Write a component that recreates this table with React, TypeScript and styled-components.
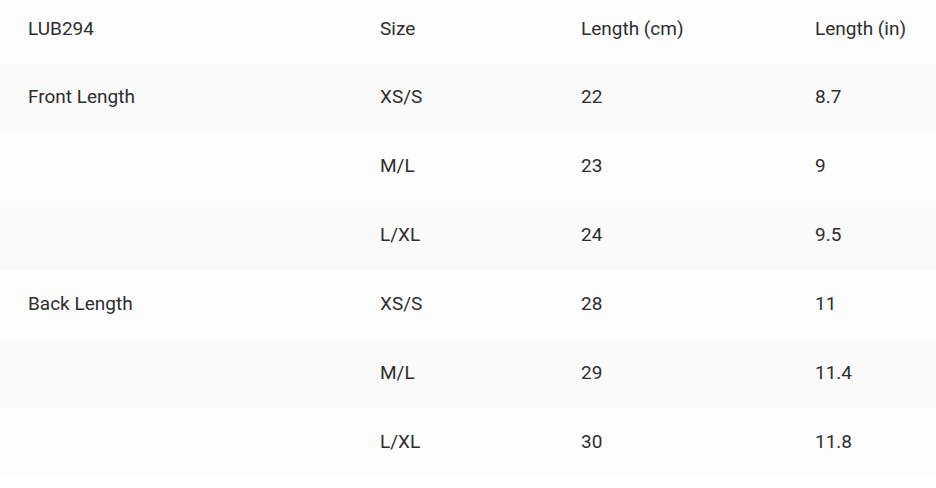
import React from "react";
import styled, { createGlobalStyle } from "styled-components";

const Global = createGlobalStyle`
  html, body { margin: 0; padding: 0; background: #ffffff; }
  body { font-family: Roboto, "Liberation Sans", sans-serif; }
`;

const Table = styled.div`
  display: grid;
  grid-template-columns: 352px 201px 234px 1fr;
  width: 936px;
`;

const Row = styled.div<{ $striped?: boolean; $header?: boolean }>`
  display: contents;
  & > div {
    background: ${(p) => (p.$striped ? "#fafafa" : "#fdfdfd")};
    padding: ${(p) => (p.$header ? "17px 0 23px 28px" : "22px 0 24px 28px")};
  }
`;

const Cell = styled.div`
  font-size: 19px;
  line-height: 23px;
  color: #2e2e2e;
  white-space: nowrap;
`;

const rows: [string, string, string, string][] = [
  ["Front Length", "XS/S", "22", "8.7"],
  ["", "M/L", "23", "9"],
  ["", "L/XL", "24", "9.5"],
  ["Back Length", "XS/S", "28", "11"],
  ["", "M/L", "29", "11.4"],
  ["", "L/XL", "30", "11.8"],
];

export default function App() {
  return (
    <>
      <Global />
      <Table>
        <Row $header>
          <Cell>LUB294</Cell>
          <Cell>Size</Cell>
          <Cell>Length (cm)</Cell>
          <Cell>Length (in)</Cell>
        </Row>
        {rows.map((r, i) => (
          <Row key={i} $striped={i % 2 === 0}>
            {r.map((c, j) => (
              <Cell key={j}>{c}</Cell>
            ))}
          </Row>
        ))}
      </Table>
    </>
  );
}
